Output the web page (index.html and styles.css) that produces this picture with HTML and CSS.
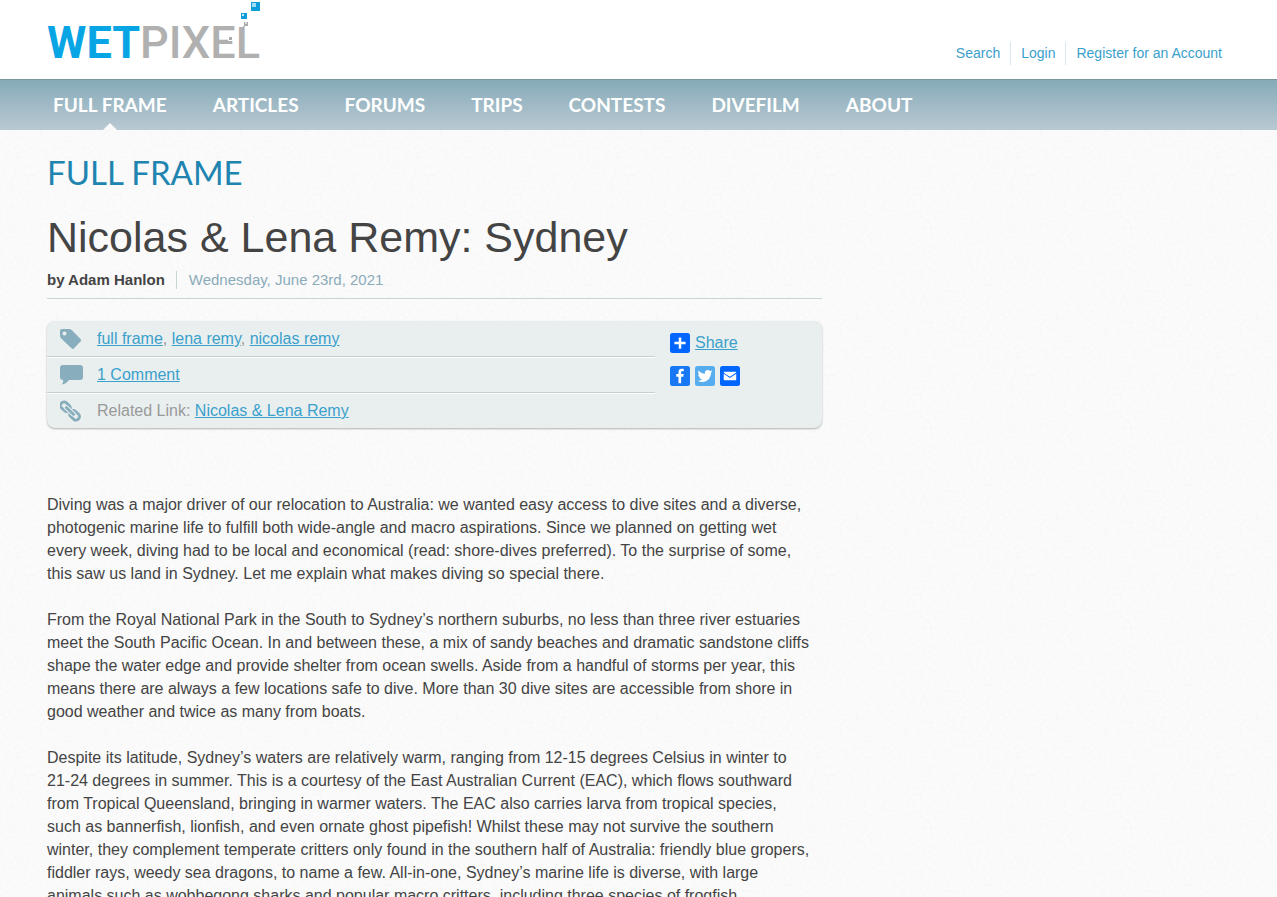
FILE: index.html
```html
<!DOCTYPE html>
<html lang="en">
<head>
    <meta charset="UTF-8">
    <meta name="viewport" content="width=device-width, initial-scale=1.0">
    <title>Nicolas &amp; Lena Remy: Sydney</title>
    <link rel="stylesheet" href="styles.css">
</head>
<body>
    <header class="header">
        <a class="logo" href="#"><span class="logo-wet">WET</span><span class="logo-pixel">PIXEL</span>
            <svg class="logo-bubbles" width="32" height="46" viewBox="0 0 32 46">
                <rect x="23" y="2" width="9" height="9" fill="#0d9ddb"/>
                <rect x="24" y="3" width="4" height="4" fill="#a5dcf5"/>
                <rect x="13" y="13" width="6" height="6" fill="#0d9ddb"/>
                <rect x="14" y="14" width="2" height="2" fill="#c9ebf9"/>
                <rect x="16" y="22" width="4" height="4" fill="#aaa"/>
                <rect x="17" y="22" width="2" height="2" fill="#ddd"/>
                <rect x="11" y="24" width="4" height="3" fill="#fff"/>
                <rect x="0" y="36" width="6" height="5" fill="#fff"/>
                <rect x="1" y="37" width="3" height="3" fill="#aaa"/>
            </svg>
        </a>
        <ul class="user-links">
            <li><a href="#">Search</a></li>
            <li><a href="#">Login</a></li>
            <li><a href="#">Register for an Account</a></li>
        </ul>
    </header>

    <nav class="nav">
        <a class="active" href="#">FULL FRAME</a>
        <a href="#">ARTICLES</a>
        <a href="#">FORUMS</a>
        <a href="#">TRIPS</a>
        <a href="#">CONTESTS</a>
        <a href="#">DIVEFILM</a>
        <a href="#">ABOUT</a>
    </nav>

    <main class="content">
        <h2 class="section-title">FULL FRAME</h2>
        <h1 class="title">Nicolas &amp; Lena Remy: Sydney</h1>
        <div class="byline">
            <strong class="author">by Adam Hanlon</strong>
            <span class="date">Wednesday, June 23rd, 2021</span>
        </div>

        <div class="meta">
            <ul class="meta-list">
                <li>
                    <svg class="icon" width="24" height="22" viewBox="0 0 24 22">
                        <path fill="#88adbc" fill-rule="evenodd" d="M2 1h7c1 0 2 .4 2.700 1.100L20.500 11c.8.800.8 1.800 0 2.600L14 20.300c-.8.800-1.700.8-2.500 0L1.200 10.500C.4 9.700 0 9 0 8V3c0-1.200.8-2 2-2zm2.500 2.500a2 2 0 1 0 0 4 2 2 0 0 0 0-4z"/>
                    </svg>
                    <span><a href="#">full frame</a>, <a href="#">lena remy</a>, <a href="#">nicolas remy</a></span>
                </li>
                <li>
                    <svg class="icon" width="24" height="22" viewBox="0 0 24 22">
                        <path fill="#88adbc" d="M3 1h17q3 0 3 3v9q0 3-3 3H9c-1.500 2.300-4 4-7.500 4.500C3 19 3.500 17.500 3 16q-3 0-3-3V4q0-3 3-3z"/>
                    </svg>
                    <a href="#">1 Comment</a>
                </li>
                <li>
                    <svg class="icon" width="24" height="22" viewBox="0 0 24 22">
                        <g fill="none" stroke="#88adbc" stroke-width="2.800" transform="rotate(43 10 11)">
                            <rect x="-1.500" y="7.500" width="10.500" height="7" rx="3"/>
                            <rect x="11" y="7.500" width="10.500" height="7" rx="3"/>
                            <path d="M4.500 11h11" stroke="#e9efef" stroke-width="5"/>
                            <path d="M5 11h10" stroke-width="2.800" stroke-linecap="round"/>
                        </g>
                    </svg>
                    <span>Related Link: <a href="#">Nicolas &amp; Lena Remy</a></span>
                </li>
            </ul>
            <div class="share">
                <a class="share-main" href="#">
                    <svg width="20" height="20" viewBox="0 0 32 32">
                        <rect width="32" height="32" rx="4" fill="#0166ff"/>
                        <path fill="#fff" d="M14 7h4v18h-4z M7 14h18v4H7z"/>
                    </svg>
                    <span>Share</span>
                </a>
                <div class="share-icons">
                    <a href="#" aria-label="Facebook">
                        <svg width="20" height="20" viewBox="0 0 32 32">
                            <rect width="32" height="32" rx="4" fill="#1877f2"/>
                            <path fill="#fff" d="M17.780 27.500V17.008h3.522l.527-4.090h-4.050v-2.610c0-1.182.33-1.990 2.023-1.990h2.166V4.660c-.375-.05-1.660-.16-3.155-.16-3.123 0-5.260 1.905-5.260 5.405v3.016h-3.530v4.090h3.530V27.500h4.223z"/>
                        </svg>
                    </a>
                    <a href="#" aria-label="Twitter">
                        <svg width="20" height="20" viewBox="0 0 32 32">
                            <rect width="32" height="32" rx="4" fill="#55acee"/>
                            <path fill="#fff" d="M28 8.557a9.913 9.913 0 0 1-2.828.775 4.930 4.930 0 0 0 2.166-2.725 9.738 9.738 0 0 1-3.130 1.194 4.920 4.920 0 0 0-3.593-1.550 4.924 4.924 0 0 0-4.794 6.049c-4.090-.210-7.720-2.170-10.150-5.150a4.942 4.942 0 0 0-.665 2.477c0 1.710.870 3.214 2.190 4.100a4.968 4.968 0 0 1-2.230-.616v.060c0 2.390 1.700 4.380 3.952 4.830-.414.115-.850.174-1.297.174-.318 0-.626-.030-.928-.086a4.935 4.935 0 0 0 4.600 3.420 9.893 9.893 0 0 1-6.114 2.107c-.398 0-.790-.023-1.175-.068a13.953 13.953 0 0 0 7.550 2.213c9.056 0 14.010-7.507 14.010-14.013 0-.213-.005-.426-.015-.637.960-.695 1.795-1.560 2.455-2.550z"/>
                        </svg>
                    </a>
                    <a href="#" aria-label="Email">
                        <svg width="20" height="20" viewBox="0 0 32 32">
                            <rect width="32" height="32" rx="4" fill="#0166ff"/>
                            <path fill="#fff" d="M26 21.250v-9s-9.100 6.350-9.984 6.680C15.144 18.616 6 12.250 6 12.250v9c0 1.250.266 1.500 1.500 1.500h17c1.266 0 1.500-.220 1.500-1.500zm-.015-10.765c0-.910-.265-1.235-1.485-1.235h-17c-1.255 0-1.500.390-1.500 1.300l.015.140s9.035 6.220 10 6.560c1.020-.395 9.985-6.700 9.985-6.700l-.015-.065z"/>
                        </svg>
                    </a>
                </div>
            </div>
        </div>

        <article class="article">
            <p>Diving was a major driver of our relocation to Australia: we wanted easy access to dive sites and a diverse, photogenic marine life to fulfill both wide-angle and macro aspirations. Since we planned on getting wet every week, diving had to be local and economical (read: shore-dives preferred). To the surprise of some, this saw us land in Sydney. Let me explain what makes diving so special there.</p>
            <p>From the Royal National Park in the South to Sydney’s northern suburbs, no less than three river estuaries meet the South Pacific Ocean. In and between these, a mix of sandy beaches and dramatic sandstone cliffs shape the water edge and provide shelter from ocean swells. Aside from a handful of storms per year, this means there are always a few locations safe to dive. More than 30 dive sites are accessible from shore in good weather and twice as many from boats.</p>
            <p>Despite its latitude, Sydney’s waters are relatively warm, ranging from 12-15 degrees Celsius in winter to 21-24 degrees in summer. This is a courtesy of the East Australian Current (EAC), which flows southward from Tropical Queensland, bringing in warmer waters. The EAC also carries larva from tropical species, such as bannerfish, lionfish, and even ornate ghost pipefish! Whilst these may not survive the southern winter, they complement temperate critters only found in the southern half of Australia: friendly blue gropers, fiddler rays, weedy sea dragons, to name a few. All-in-one, Sydney’s marine life is diverse, with large animals such as wobbegong sharks and popular macro critters, including three species of frogfish.</p>
        </article>
    </main>
</body>
</html>
```
FILE: styles.css
```css
body {
    margin: 0;
    font-family: "Liberation Sans", Arial, sans-serif;
    font-size: 16px;
    line-height: 23px;
    color: #444;
    background-color: #fbfbfb;
    /* light paper grain */
    background-image: url("data:image/svg+xml,%3Csvg xmlns='http://www.w3.org/2000/svg' width='200' height='200'%3E%3Cfilter id='n'%3E%3CfeTurbulence type='fractalNoise' baseFrequency='.3' numOctaves='2' stitchTiles='stitch'/%3E%3CfeColorMatrix values='0 0 0 0 .9 0 0 0 0 .9 0 0 0 0 .9 1 0 0 0 -.35'/%3E%3C/filter%3E%3Crect width='200' height='200' filter='url(%23n)'/%3E%3C/svg%3E");
}
a {
    color: #3aa0cc;
}
ul {
    list-style: none;
    margin: 0;
    padding: 0;
}
.header {
    display: flex;
    justify-content: space-between;
    height: 79px;
    padding: 0 45px 0 47px;
    background-color: #fff;
}
.logo {
    position: relative;
    padding-top: 15px;
    font-family: Roboto, sans-serif;
    font-size: 45px;
    line-height: 56px;
    text-decoration: none;
}
.logo-wet {
    font-weight: 700;
    color: #08a5e5;
}
.logo-pixel {
    font-weight: 500;
    color: #b0b0b0;
}
/* pixels rising off the last letters */
.logo-bubbles {
    position: absolute;
    top: 0;
    right: 0;
}
.user-links {
    display: flex;
    align-items: center;
    padding-top: 28px;
    font-size: 14px;
}
.user-links li {
    padding: 0 10px;
}
.user-links li + li {
    border-left: 1px solid #d8e8ee;
}
.user-links a {
    text-decoration: none;
}
.nav {
    display: flex;
    gap: 46px;
    padding: 0 53px;
    border-top: 1px solid #7b959f;
    background: linear-gradient(#86abb9, #b9c9d2);
}
.nav a {
    position: relative;
    font-family: Lato, sans-serif;
    font-size: 19px;
    font-weight: 700;
    line-height: 50px;
    color: #fff;
    text-decoration: none;
}
.nav .active::after {
    content: "";
    position: absolute;
    bottom: 0;
    left: 50%;
    margin-left: -7px;
    border: 7px solid transparent;
    border-top: 0;
    border-bottom-color: #fafafa;
}
.content {
    max-width: 775px;
    padding: 20px 47px;
}
.section-title {
    margin: 0;
    font-family: Lato, sans-serif;
    font-size: 33px;
    font-weight: 400;
    line-height: 44px;
    color: #2084b0;
}
.title {
    margin: 18px 0 8px;
    font-size: 43px;
    font-weight: 400;
    line-height: 50px;
}
.byline {
    display: flex;
    align-items: center;
    padding-bottom: 8px;
    border-bottom: 1px solid #c6d5d6;
    font-size: 15px;
    line-height: 20px;
}
.author {
    padding-right: 11px;
    border-right: 1px solid #c6d5d6;
    line-height: 18px;
}
.date {
    padding-left: 12px;
    color: #8aabb9;
}
.meta {
    display: flex;
    margin-top: 22px;
    border-radius: 8px;
    background-color: #e9efef;
    box-shadow: 0 1px 2px rgba(0, 0, 0, 0.3);
    color: #999;
}
.meta-list {
    flex: 1;
}
.meta-list li {
    display: flex;
    align-items: center;
    gap: 13px;
    height: 35px;
    padding-left: 13px;
    border-bottom: 1px solid #c5d0d2;
    box-shadow: 0 1px 0 #fff;
}
.meta-list li:last-child {
    border-bottom: 0;
    box-shadow: none;
}
.share {
    width: 152px;
    padding: 12px 0 0 15px;
}
.share svg {
    display: block;
}
.share-main {
    display: flex;
    align-items: center;
    gap: 5px;
    line-height: 20px;
    text-decoration: none;
}
.share-main span {
    text-decoration: underline;
}
.share-icons {
    display: flex;
    gap: 5px;
    margin-top: 13px;
}
.article {
    margin-top: 65px;
    padding-right: 10px;
}
.article p {
    margin: 0 0 23px;
}
```
